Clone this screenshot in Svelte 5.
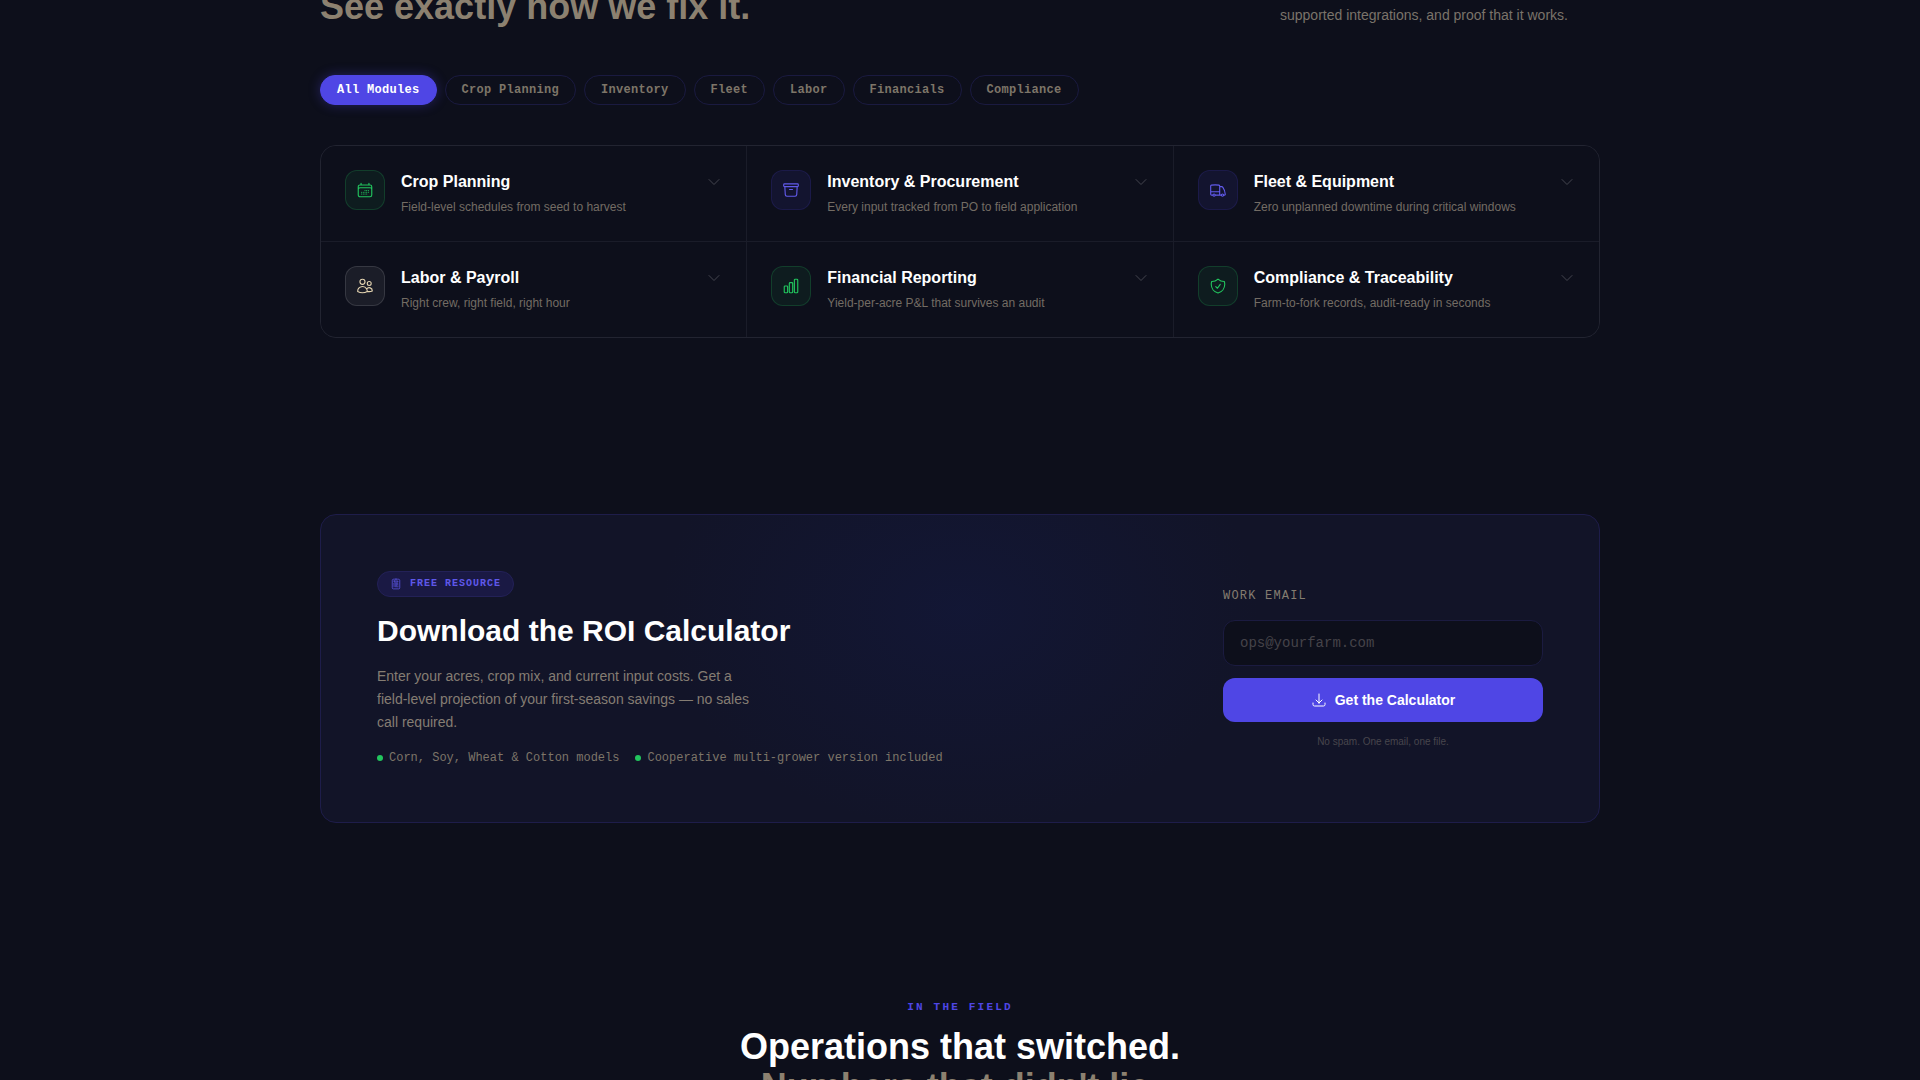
<script lang="ts">
	type Tone = 'green' | 'indigo' | 'sand';

	interface Module {
		id: string;
		title: string;
		summary: string;
		filter: string;
		tone: Tone;
		icon: string;
	}

	const filters = [
		'All Modules',
		'Crop Planning',
		'Inventory',
		'Fleet',
		'Labor',
		'Financials',
		'Compliance'
	];

	const modules: Module[] = [
		{
			id: 'crop',
			title: 'Crop Planning',
			summary: 'Field-level schedules from seed to harvest',
			filter: 'Crop Planning',
			tone: 'green',
			icon: 'M6.75 3v2.25M17.25 3v2.25M3 18.75V7.5a2.25 2.25 0 0 1 2.25-2.25h13.5A2.25 2.25 0 0 1 21 7.5v11.25m-18 0A2.25 2.25 0 0 0 5.25 21h13.5A2.25 2.25 0 0 0 21 18.75m-18 0v-7.5A2.25 2.25 0 0 1 5.25 9h13.5A2.25 2.25 0 0 1 21 11.25v7.5m-9-6h.008v.008H12v-.008ZM12 15h.008v.008H12V15Zm0 2.25h.008v.008H12v-.008ZM9.75 15h.008v.008H9.75V15Zm0 2.25h.008v.008H9.75v-.008ZM7.5 15h.008v.008H7.5V15Zm0 2.25h.008v.008H7.5v-.008Zm6.75-4.5h.008v.008h-.008v-.008Zm0 2.25h.008v.008h-.008V15Zm0 2.25h.008v.008h-.008v-.008Zm2.25-4.5h.008v.008H16.5v-.008Zm0 2.25h.008v.008H16.5V15Z'
		},
		{
			id: 'inventory',
			title: 'Inventory & Procurement',
			summary: 'Every input tracked from PO to field application',
			filter: 'Inventory',
			tone: 'indigo',
			icon: 'm20.25 7.5-.625 10.632a2.25 2.25 0 0 1-2.247 2.118H6.622a2.25 2.25 0 0 1-2.247-2.118L3.75 7.5M10 11.25h4M3.375 7.5h17.25c.621 0 1.125-.504 1.125-1.125v-1.5c0-.621-.504-1.125-1.125-1.125H3.375c-.621 0-1.125.504-1.125 1.125v1.5c0 .621.504 1.125 1.125 1.125Z'
		},
		{
			id: 'fleet',
			title: 'Fleet & Equipment',
			summary: 'Zero unplanned downtime during critical windows',
			filter: 'Fleet',
			tone: 'indigo',
			icon: 'M8.25 18.75a1.5 1.5 0 0 1-3 0m3 0a1.5 1.5 0 0 0-3 0m3 0h6m-9 0H3.375a1.125 1.125 0 0 1-1.125-1.125V14.25m17.25 4.5a1.5 1.5 0 0 1-3 0m3 0a1.5 1.5 0 0 0-3 0m3 0h1.125c.621 0 1.129-.504 1.09-1.124a17.902 17.902 0 0 0-3.213-9.193 2.056 2.056 0 0 0-1.58-.86H14.25M16.5 18.75h-2.25m0-11.177v-.958c0-.568-.422-1.048-.987-1.106a48.554 48.554 0 0 0-10.026 0 1.106 1.106 0 0 0-.987 1.106v7.635m12-6.677v6.677m0 4.5v-4.5m0 0h-12'
		},
		{
			id: 'labor',
			title: 'Labor & Payroll',
			summary: 'Right crew, right field, right hour',
			filter: 'Labor',
			tone: 'sand',
			icon: 'M15 19.128a9.38 9.38 0 0 0 2.625.372 9.337 9.337 0 0 0 4.121-.952 4.125 4.125 0 0 0-7.533-2.493M15 19.128v-.003c0-1.113-.285-2.16-.786-3.07M15 19.128v.106A12.318 12.318 0 0 1 8.624 21c-2.331 0-4.512-.645-6.374-1.766l-.001-.109a6.375 6.375 0 0 1 11.964-3.07M12 6.375a3.375 3.375 0 1 1-6.75 0 3.375 3.375 0 0 1 6.75 0Zm8.25 2.25a2.625 2.625 0 1 1-5.25 0 2.625 2.625 0 0 1 5.25 0Z'
		},
		{
			id: 'finance',
			title: 'Financial Reporting',
			summary: 'Yield-per-acre P&L that survives an audit',
			filter: 'Financials',
			tone: 'green',
			icon: 'M3 13.125C3 12.504 3.504 12 4.125 12h2.25c.621 0 1.125.504 1.125 1.125v6.75C7.5 20.496 6.996 21 6.375 21h-2.25A1.125 1.125 0 0 1 3 19.875v-6.75ZM9.75 8.625c0-.621.504-1.125 1.125-1.125h2.25c.621 0 1.125.504 1.125 1.125v11.25c0 .621-.504 1.125-1.125 1.125h-2.25a1.125 1.125 0 0 1-1.125-1.125V8.625ZM16.5 4.125c0-.621.504-1.125 1.125-1.125h2.25C20.496 3 21 3.504 21 4.125v15.75c0 .621-.504 1.125-1.125 1.125h-2.25a1.125 1.125 0 0 1-1.125-1.125V4.125Z'
		},
		{
			id: 'compliance',
			title: 'Compliance & Traceability',
			summary: 'Farm-to-fork records, audit-ready in seconds',
			filter: 'Compliance',
			tone: 'green',
			icon: 'M9 12.75 11.25 15 15 9.75m-3-7.036A11.959 11.959 0 0 1 3.598 6 11.99 11.99 0 0 0 3 9.749c0 5.592 3.824 10.29 9 11.623 5.176-1.332 9-6.03 9-11.622 0-1.31-.21-2.571-.598-3.751h-.152c-3.196 0-6.1-1.248-8.25-3.285Z'
		}
	];

	const perks = ['Corn, Soy, Wheat & Cotton models', 'Cooperative multi-grower version included'];

	const calculatorIcon =
		'M15.75 15.75V18m-7.5-6.75h.008v.008H8.25v-.008Zm0 2.25h.008v.008H8.25V13.5Zm0 2.25h.008v.008H8.25v-.008Zm0 2.25h.008v.008H8.25V18Zm2.498-6.75h.007v.008h-.007v-.008Zm0 2.25h.007v.008h-.007V13.5Zm0 2.25h.007v.008h-.007v-.008Zm0 2.25h.007v.008h-.007V18Zm2.504-6.75h.008v.008h-.008v-.008Zm0 2.25h.008v.008h-.008V13.5Zm0 2.25h.008v.008h-.008v-.008Zm0 2.25h.008v.008h-.008V18Zm2.498-6.75h.008v.008h-.008v-.008Zm0 2.25h.008v.008h-.008V13.5ZM8.25 6h7.5v2.25h-7.5V6ZM12 2.25c-1.892 0-3.758.11-5.593.322C5.307 2.7 4.5 3.65 4.5 4.757V19.5a2.25 2.25 0 0 0 2.25 2.25h10.5a2.25 2.25 0 0 0 2.25-2.25V4.757c0-1.108-.806-2.057-1.907-2.185A48.507 48.507 0 0 0 12 2.25Z';
	const downloadIcon =
		'M3 16.5v2.25A2.25 2.25 0 0 0 5.25 21h13.5A2.25 2.25 0 0 0 21 18.75V16.5M16.5 12 12 16.5m0 0L7.5 12m4.5 4.5V3';
	const chevronIcon = 'm19.5 8.25-7.5 7.5-7.5-7.5';

	let active = $state('All Modules');
	let openId = $state('');
	let email = $state('');

	const visible = $derived(
		active === 'All Modules' ? modules : modules.filter((m) => m.filter === active)
	);
</script>

{#snippet icon(path: string, size: number)}
	<svg
		width={size}
		height={size}
		viewBox="0 0 24 24"
		fill="none"
		stroke="currentColor"
		stroke-width="1.5"
		stroke-linecap="round"
		stroke-linejoin="round"
		aria-hidden="true"
	>
		<path d={path} />
	</svg>
{/snippet}

<main class="page">
	<section class="modules">
		<header class="intro">
			<h2 class="headline muted">See exactly how we fix it.</h2>
			<p class="lede">
				Click any module to expand real workflows, supported integrations, and proof that it works.
			</p>
		</header>

		<div class="filters">
			{#each filters as name (name)}
				<button
					type="button"
					class="pill"
					class:active={active === name}
					aria-pressed={active === name}
					onclick={() => (active = name)}
				>
					{name}
				</button>
			{/each}
		</div>

		<div class="grid">
			{#each visible as m (m.id)}
				<button
					type="button"
					class="module"
					class:open={openId === m.id}
					aria-expanded={openId === m.id}
					onclick={() => (openId = openId === m.id ? '' : m.id)}
				>
					<span class="tile {m.tone}">{@render icon(m.icon, 18)}</span>
					<span class="copy">
						<span class="title">{m.title}</span>
						<span class="summary">{m.summary}</span>
					</span>
					<span class="chevron">{@render icon(chevronIcon, 16)}</span>
				</button>
			{/each}
		</div>
	</section>

	<section class="resource">
		<div class="pitch">
			<span class="badge">{@render icon(calculatorIcon, 12)}Free Resource</span>
			<h2>Download the ROI Calculator</h2>
			<p>
				Enter your acres, crop mix, and current input costs. Get a field-level projection of your
				first-season savings — no sales call required.
			</p>
			<ul>
				{#each perks as perk}
					<li>{perk}</li>
				{/each}
			</ul>
		</div>
		<form onsubmit={(e) => e.preventDefault()}>
			<label for="work-email">Work Email</label>
			<input id="work-email" type="email" placeholder="ops@yourfarm.com" bind:value={email} />
			<button type="submit">{@render icon(downloadIcon, 16)}Get the Calculator</button>
			<p>No spam. One email, one file.</p>
		</form>
	</section>

	<section class="field">
		<p class="eyebrow">In the Field</p>
		<h2 class="headline">
			Operations that switched.<br />
			<span class="muted">Numbers that didn't lie.</span>
		</h2>
	</section>
</main>

<style>
	:global(body) {
		background: #0d0f1b;
	}
	.page {
		--sans: 'Liberation Sans', Arial, sans-serif;
		--mono: 'Liberation Mono', 'Courier New', monospace;
		--bg: #0d0f1b;
		--indigo: #4f46e5;
		--section-gap: 176px;
		height: 100vh;
		overflow: hidden;
		background: var(--bg);
		color: #fff;
		font-family: var(--sans);
	}
	section {
		box-sizing: border-box;
		max-width: 1280px;
		margin: 0 auto;
	}
	h2,
	p,
	ul {
		margin: 0;
		padding: 0;
	}
	button {
		font-family: inherit;
		cursor: pointer;
	}
	svg {
		display: block;
		flex: none;
	}
	.headline {
		font-size: 36px;
		line-height: 40px;
		font-weight: 700;
	}
	.muted {
		color: #8c8170;
	}

	.intro {
		display: flex;
		justify-content: space-between;
		align-items: flex-end;
		margin-top: -19px;
		margin-bottom: 48px;
	}
	.lede {
		width: 320px;
		font-size: 14px;
		line-height: 23px;
		color: #7a736a;
	}
	.filters {
		display: flex;
		flex-wrap: wrap;
		gap: 8px;
		margin-bottom: 40px;
	}
	.pill {
		padding: 6px 16px;
		border: 1px solid #1a1a40;
		border-radius: 999px;
		background: transparent;
		color: #7d7568;
		font: 700 12px/16px var(--mono);
		letter-spacing: 0.025em;
	}
	.pill.active {
		background: var(--indigo);
		border-color: var(--indigo);
		color: #fff;
		box-shadow: 0 0 12px rgba(79, 70, 229, 0.35);
	}

	/* the 1px gaps let the grid background through as divider lines */
	.grid {
		display: grid;
		grid-template-columns: repeat(3, 1fr);
		gap: 1px;
		border: 1px solid #222431;
		border-radius: 16px;
		background: #1a1c29;
		overflow: hidden;
	}
	.module {
		display: flex;
		align-items: flex-start;
		gap: 16px;
		padding: 24px;
		border: 0;
		background: var(--bg);
		color: inherit;
		text-align: left;
	}
	.tile {
		display: grid;
		place-items: center;
		box-sizing: border-box;
		width: 40px;
		height: 40px;
		flex: none;
		border: 1px solid;
		border-radius: 12px;
	}
	.tile.green {
		color: #22c55e;
		background: rgba(34, 197, 94, 0.08);
		border-color: rgba(34, 197, 94, 0.2);
	}
	.tile.indigo {
		color: #615aea;
		background: rgba(79, 70, 229, 0.1);
		border-color: rgba(79, 70, 229, 0.15);
	}
	.tile.sand {
		color: #e3d3b0;
		background: rgba(255, 255, 255, 0.06);
		border-color: rgba(255, 255, 255, 0.12);
	}
	.copy {
		display: grid;
		flex: 1;
		gap: 4px;
	}
	.title {
		font-size: 16px;
		line-height: 24px;
		font-weight: 700;
	}
	.summary {
		font-size: 12px;
		line-height: 19px;
		color: #736c64;
	}
	.chevron {
		margin-top: 4px;
		color: #44454f;
	}
	.open .chevron {
		transform: rotate(180deg);
	}

	.resource {
		display: flex;
		align-items: center;
		justify-content: space-between;
		gap: 48px;
		margin-top: var(--section-gap);
		padding: 56px;
		border: 1px solid #1e1d4a;
		border-radius: 16px;
		background:
			radial-gradient(ellipse 300px 220px at 50% 31%, rgba(20, 30, 90, 0.25), transparent),
			#121428;
	}
	.badge {
		display: inline-flex;
		align-items: center;
		gap: 8px;
		padding: 4px 12px;
		border: 1px solid #232157;
		border-radius: 999px;
		background: #1a1944;
		color: #5f58ea;
		font: 700 10px/16px var(--mono);
		letter-spacing: 0.1em;
		text-transform: uppercase;
	}
	.pitch {
		display: flex;
		flex-direction: column;
		align-items: flex-start;
		gap: 16px;
	}
	.pitch h2 {
		font-size: 30px;
		line-height: 36px;
	}
	.pitch p {
		max-width: 384px;
		font-size: 14px;
		line-height: 23px;
		color: #857d73;
	}
	.pitch ul {
		display: flex;
		flex-wrap: wrap;
		gap: 16px;
		list-style: none;
	}
	.pitch li {
		display: flex;
		align-items: center;
		gap: 6px;
		color: #7d7568;
		font: 12px/16px var(--mono);
	}
	.pitch li::before {
		content: '';
		width: 6px;
		height: 6px;
		border-radius: 50%;
		background: #22c55e;
	}

	form {
		display: flex;
		flex-direction: column;
		gap: 12px;
		width: 320px;
		flex: none;
	}
	label {
		margin-bottom: 4px;
		color: #857d70;
		font: 12px/16px var(--mono);
		letter-spacing: 0.1em;
		text-transform: uppercase;
	}
	input {
		padding: 12px 16px;
		border: 1px solid #1b1b40;
		border-radius: 12px;
		background: var(--bg);
		color: #fff;
		font: 14px/20px var(--mono);
	}
	input::placeholder {
		color: #454349;
	}
	form button {
		display: flex;
		align-items: center;
		justify-content: center;
		gap: 8px;
		padding: 12px 24px;
		border: 0;
		border-radius: 12px;
		background: var(--indigo);
		color: #fff;
		font-size: 14px;
		line-height: 20px;
		font-weight: 700;
	}
	form p {
		font-size: 10px;
		line-height: 16px;
		text-align: center;
		color: #48464d;
	}

	.field {
		margin-top: var(--section-gap);
		text-align: center;
	}
	.eyebrow {
		margin-bottom: 12px;
		color: var(--indigo);
		font: 700 11px/16px var(--mono);
		letter-spacing: 0.2em;
		text-transform: uppercase;
	}
</style>
